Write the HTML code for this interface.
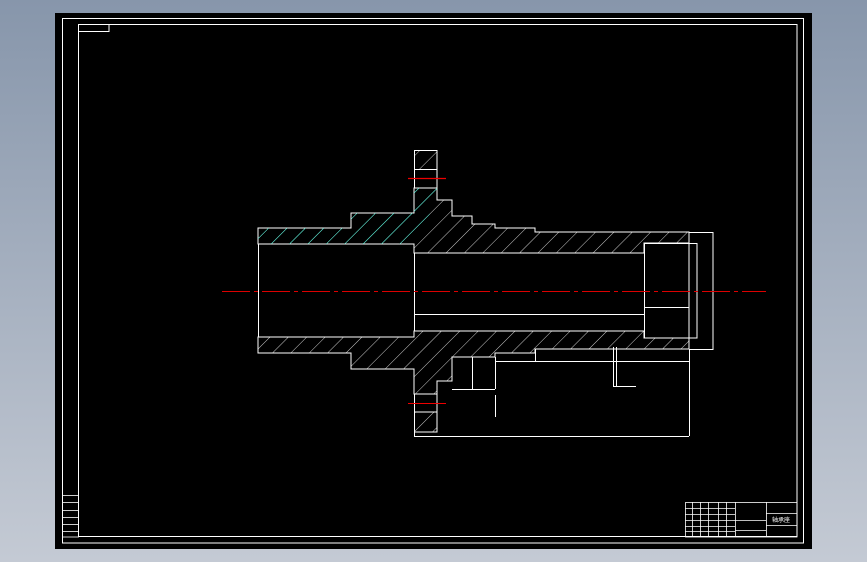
<!DOCTYPE html>
<html><head><meta charset="utf-8"><style>
html,body{margin:0;padding:0;width:867px;height:562px;overflow:hidden;background:linear-gradient(#8796ab,#c4cad4);}
svg{position:absolute;left:0;top:0}
</style></head><body>
<svg width="867" height="562" viewBox="0 0 867 562" xmlns="http://www.w3.org/2000/svg">
<defs>
<pattern id="hw" patternUnits="userSpaceOnUse" width="13" height="13" patternTransform="rotate(45)">
<line x1="0" y1="0" x2="0" y2="13" stroke="#fff" stroke-width="0.8"/></pattern>
<pattern id="hc" patternUnits="userSpaceOnUse" width="13" height="13" patternTransform="rotate(45)">
<line x1="0" y1="0" x2="0" y2="13" stroke="#2fd" stroke-width="0.8"/></pattern>
<clipPath id="lc"><rect x="250" y="140" width="180" height="120"/></clipPath>
</defs>
<rect x="55" y="13" width="757" height="536" fill="#000"/>
<g fill="none" stroke="#fff" stroke-width="1">
<rect x="62.5" y="18.5" width="741" height="524.5"/>
<rect x="78.5" y="24.5" width="718.5" height="512"/>
<rect x="78.5" y="24.5" width="30.5" height="7"/>
</g>
<!-- top section -->
<polygon points="258,228 351,228 351,213 414,213 414,188 437,188 437,200 452,200 452,216 472,216 472,224 495,224 495,228 535,228 535,232 689,232 689,243 644,243 644,253 414,253 414,244 258,244" fill="url(#hw)" stroke="#fff"/>
<polygon points="258,228 351,228 351,213 414,213 414,188 437,188 437,200 414,244 258,244" fill="url(#hc)" stroke="none"/>
<!-- bottom section -->
<polygon points="258,337 414,337 414,331 644,331 644,338 689,338 689,349 535,349 535,353 495,353 495,357 472,357 452,357 452,381 437,381 437,394 414,394 414,369 351,369 351,353 258,353" fill="url(#hw)" stroke="#fff"/>
<!-- flange ends -->
<rect x="414.5" y="150.5" width="22.5" height="19" fill="url(#hw)" stroke="#fff"/>
<line x1="414.5" y1="169" x2="414.5" y2="188" stroke="#fff"/>
<line x1="437" y1="169" x2="437" y2="188" stroke="#fff"/>
<rect x="414.5" y="412" width="22.5" height="20" fill="url(#hw)" stroke="#fff"/>
<line x1="414.5" y1="394" x2="414.5" y2="412" stroke="#fff"/>
<line x1="437" y1="394" x2="437" y2="412" stroke="#fff"/>
<g fill="none" stroke="#fff" stroke-width="1">
<line x1="258.5" y1="244" x2="258.5" y2="337"/>
<line x1="414.5" y1="253" x2="414.5" y2="331"/>
<line x1="414" y1="314.5" x2="644" y2="314.5"/>
<rect x="644.5" y="243.5" width="44.5" height="94.5"/>
<line x1="644" y1="307.5" x2="689" y2="307.5"/>
<polyline points="689,243.5 697,243.5 697,338 689,338"/>
<polyline points="689,232.5 713,232.5 713,349.5 689,349.5"/>
<line x1="689.5" y1="349" x2="689.5" y2="436"/>
<line x1="414.5" y1="432" x2="414.5" y2="436"/>
<line x1="414" y1="436.5" x2="689" y2="436.5"/>
<line x1="495.5" y1="357" x2="495.5" y2="389"/>
<line x1="472.5" y1="357" x2="472.5" y2="389"/>
<line x1="452" y1="389.5" x2="495" y2="389.5"/>
<line x1="495" y1="361.5" x2="689" y2="361.5"/>
<line x1="535.5" y1="349" x2="535.5" y2="361"/>
<line x1="495.5" y1="395" x2="495.5" y2="417"/>
<line x1="613.5" y1="347" x2="613.5" y2="386"/>
<line x1="616.5" y1="347" x2="616.5" y2="386"/>
<line x1="613" y1="386.5" x2="636" y2="386.5"/>
</g>
<line x1="222" y1="291.5" x2="766" y2="291.5" stroke="#d00" stroke-width="1" stroke-dasharray="28,4,4,4"/>
<line x1="408" y1="178.5" x2="446" y2="178.5" stroke="#e00" stroke-width="1.2"/>
<line x1="408" y1="403.5" x2="446" y2="403.5" stroke="#e00" stroke-width="1"/>
<!-- title block -->
<g fill="none" stroke="#fff" stroke-width="0.8">
<rect x="685.5" y="502.5" width="111.5" height="34.5"/>
<line x1="735.5" y1="502" x2="735.5" y2="537"/>
<line x1="766.5" y1="502" x2="766.5" y2="537"/>
<line x1="766" y1="513.5" x2="797" y2="513.5"/>
<line x1="766" y1="525.5" x2="797" y2="525.5"/>
<line x1="685" y1="508.5" x2="735" y2="508.5"/>
<line x1="685" y1="514.5" x2="735" y2="514.5"/>
<line x1="685" y1="520.5" x2="735" y2="520.5"/>
<line x1="685" y1="526.5" x2="735" y2="526.5"/>
<line x1="685" y1="531.5" x2="735" y2="531.5"/>
<line x1="692.5" y1="502" x2="692.5" y2="537"/>
<line x1="700.5" y1="502" x2="700.5" y2="537"/>
<line x1="708.5" y1="502" x2="708.5" y2="537"/>
<line x1="718.5" y1="502" x2="718.5" y2="537"/>
<line x1="726.5" y1="502" x2="726.5" y2="537"/>
<line x1="735" y1="520.5" x2="766" y2="520.5"/>
<line x1="735" y1="530.5" x2="766" y2="530.5"/>
<rect x="62.5" y="495.5" width="16" height="41.5"/>
<line x1="62" y1="502.5" x2="78" y2="502.5"/>
<line x1="62" y1="510.5" x2="78" y2="510.5"/>
<line x1="62" y1="517.5" x2="78" y2="517.5"/>
<line x1="62" y1="524.5" x2="78" y2="524.5"/>
<line x1="62" y1="531.5" x2="78" y2="531.5"/>
</g>
<text x="772" y="522" font-family="Liberation Sans, Noto Sans CJK SC, sans-serif" font-size="6" fill="#fff">轴承座</text>
</svg>
</body></html>
